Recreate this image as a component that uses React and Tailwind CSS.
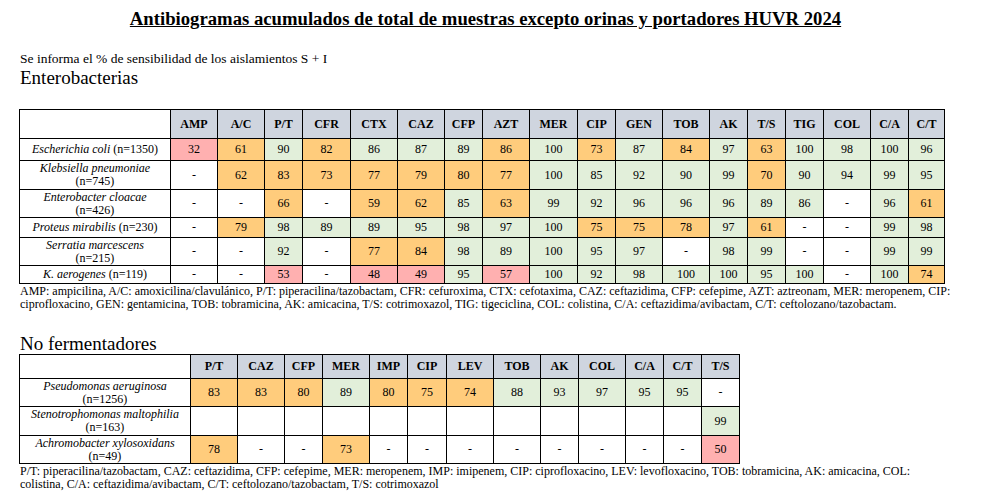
import React from "react";

const BG = {
  r: "bg-[#ffb0b0]",
  o: "bg-[#ffcc7c]",
  g: "bg-[#e2efda]",
  w: "bg-white",
};

const enteroCols = [
  ["AMP", 47], ["A/C", 47], ["P/T", 38], ["CFR", 48], ["CTX", 47], ["CAZ", 47],
  ["CFP", 38], ["AZT", 47], ["MER", 48], ["CIP", 38], ["GEN", 47], ["TOB", 47],
  ["AK", 38], ["T/S", 38], ["TIG", 38], ["COL", 47], ["C/A", 38], ["C/T", 36],
];

// each value: "<number><color>" or "-"
const enteroRows = [
  {
    name: ["Escherichia coli", " (n=1350)"], h: 22, oneLine: true,
    v: "32r 61o 90g 82o 86g 87g 89g 86o 100g 73o 87g 84o 97g 63o 100g 98g 100g 96g",
  },
  {
    name: ["Klebsiella pneumoniae", "(n=745)"], h: 29,
    v: "- 62o 83o 73o 77o 79o 80o 77o 100g 85g 92g 90g 99g 70o 90g 94g 99g 95g",
  },
  {
    name: ["Enterobacter cloacae", "(n=426)"], h: 28,
    v: "- - 66o - 59o 62o 85g 63o 99g 92g 96g 96g 96g 89g 86g - 96g 61o",
  },
  {
    name: ["Proteus mirabilis", " (n=230)"], h: 20, oneLine: true,
    v: "- 79o 98g 89g 89g 95g 98g 97g 100g 75o 75o 78o 97g 61o - - 99g 98g",
  },
  {
    name: ["Serratia marcescens", "(n=215)"], h: 28,
    v: "- - 92g - 77o 84o 98g 89g 100g 95g 97g - 98g 99g - - 99g 99g",
  },
  {
    name: ["K. aerogenes", " (n=119)"], h: 18, oneLine: true,
    v: "- - 53r - 48r 49r 95g 57r 100g 92g 98g 100g 100g 95g 100g - 100g 74o",
  },
];

const noFermCols = [
  ["P/T", 47], ["CAZ", 47], ["CFP", 38], ["MER", 47], ["IMP", 38], ["CIP", 39],
  ["LEV", 47], ["TOB", 47], ["AK", 38], ["COL", 47], ["C/A", 38], ["C/T", 38], ["T/S", 38],
];

const noFermRows = [
  {
    name: ["Pseudomonas aeruginosa", "(n=1256)"], h: 28,
    v: "83o 83o 80o 89g 80o 75o 74o 88g 93g 97g 95g 95g -",
  },
  {
    name: ["Stenotrophomonas maltophilia", "(n=163)"], h: 29,
    v: "_ _ _ _ _ _ _ _ _ _ _ _ 99g",
  },
  {
    name: ["Achromobacter xylosoxidans", "(n=49)"], h: 28,
    v: "78o - - 73o - - - - - - - - 50r",
  },
];

function Cell({ val }) {
  if (val === "_") return <td className="border border-black bg-white p-0"></td>;
  if (val === "-") return <td className="border border-black bg-white p-0 text-center">-</td>;
  const color = val.slice(-1);
  return (
    <td className={`border border-black p-0 text-center ${BG[color]}`}>{val.slice(0, -1)}</td>
  );
}

function AbTable({ cols, rows, firstW, headH }) {
  const total = firstW + cols.reduce((s, c) => s + c[1], 0);
  return (
    <table
      className="table-fixed border-collapse border border-black font-['Liberation_Serif',serif] text-[12px] leading-[13px] text-black"
      style={{ width: total }}
    >
      <colgroup>
        <col style={{ width: firstW }} />
        {cols.map(([n, w]) => (
          <col key={n} style={{ width: w }} />
        ))}
      </colgroup>
      <thead>
        <tr style={{ height: headH }}>
          <th className="border border-black bg-white p-0"></th>
          {cols.map(([n]) => (
            <th key={n} className="border border-black bg-[#cfd5df] p-0 text-center text-[12px] font-bold">
              {n}
            </th>
          ))}
        </tr>
      </thead>
      <tbody>
        {rows.map((r) => (
          <tr key={r.name[0]} style={{ height: r.h }}>
            <td className="border border-black bg-white p-0 text-center">
              <i>{r.name[0]}</i>
              {r.oneLine ? r.name[1] : (
                <>
                  <br />
                  {r.name[1]}
                </>
              )}
            </td>
            {r.v.split(" ").map((val, i) => (
              <Cell key={i} val={val} />
            ))}
          </tr>
        ))}
      </tbody>
    </table>
  );
}

export default function App() {
  return (
    <div className="w-[985px] h-[498px] bg-white overflow-hidden font-['Liberation_Serif',serif] text-black">
      <h1 className="mt-[8px] pr-[14px] text-center text-[18.7px] leading-[22px] font-bold underline">
        Antibiogramas acumulados de total de muestras excepto orinas y portadores HUVR 2024
      </h1>

      <div className="pl-[20px]">
        <p className="mt-[21px] text-[13.5px] leading-[15px]">
          Se informa el % de sensibilidad de los aislamientos S + I
        </p>
        <h2 className="mt-[2px] text-[19px] leading-[20px]">Enterobacterias</h2>
      </div>

      <div className="mt-[21px] pl-[19px]">
        <AbTable cols={enteroCols} rows={enteroRows} firstW={151} headH={29} />
        <p className="pl-px mt-[1px] text-[12px] leading-[13px] whitespace-nowrap">
          AMP: ampicilina, A/C: amoxicilina/clavulánico, P/T: piperacilina/tazobactam, CFR: cefuroxima, CTX: cefotaxima, CAZ: ceftazidima, CFP: cefepime, AZT: aztreonam, MER: meropenem, CIP:
          <br />
          ciprofloxacino, GEN: gentamicina, TOB: tobramicina, AK: amicacina, T/S: cotrimoxazol, TIG: tigeciclina, COL: colistina, C/A: ceftazidima/avibactam, C/T: ceftolozano/tazobactam.
        </p>
      </div>

      <div className="pl-[19px]">
        <h2 className="mt-[23px] pl-px text-[19px] leading-[20px]">No fermentadores</h2>
        <AbTable cols={noFermCols} rows={noFermRows} firstW={171} headH={24} />
        <p className="pl-px mt-[1px] text-[12px] leading-[12.5px] whitespace-nowrap">
          P/T: piperacilina/tazobactam, CAZ: ceftazidima, CFP: cefepime, MER: meropenem, IMP: imipenem, CIP: ciprofloxacino, LEV: levofloxacino, TOB: tobramicina, AK: amicacina, COL:
          <br />
          colistina, C/A: ceftazidima/avibactam, C/T: ceftolozano/tazobactam, T/S: cotrimoxazol
        </p>
      </div>
    </div>
  );
}
